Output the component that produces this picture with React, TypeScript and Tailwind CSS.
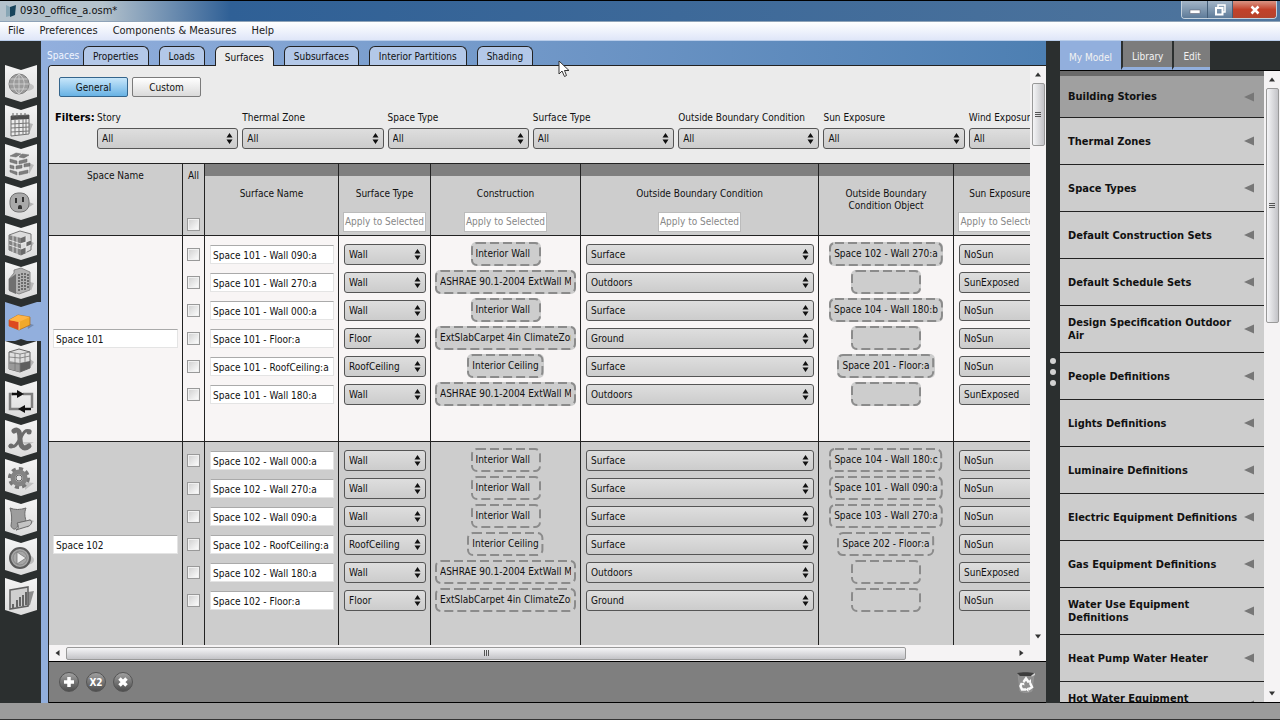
import type { ReactNode } from 'react';

type Surface = { name: string; type: string; construction: string; boundary: string; object: string; sun: string };
type Space = { name: string; rowClass: string; surfaces: Surface[] };

const EXT_WALL = 'ASHRAE 90.1-2004 ExtWall Mass ClimateZone';
const EXT_SLAB = 'ExtSlabCarpet 4in ClimateZone 1-8';

const spaces: Space[] = [
  {
    name: 'Space 101',
    rowClass: 'bg-[#f8f5f5]',
    surfaces: [
      { name: 'Space 101 - Wall 090:a', type: 'Wall', construction: 'Interior Wall', boundary: 'Surface', object: 'Space 102 - Wall 270:a', sun: 'NoSun' },
      { name: 'Space 101 - Wall 270:a', type: 'Wall', construction: EXT_WALL, boundary: 'Outdoors', object: '', sun: 'SunExposed' },
      { name: 'Space 101 - Wall 000:a', type: 'Wall', construction: 'Interior Wall', boundary: 'Surface', object: 'Space 104 - Wall 180:b', sun: 'NoSun' },
      { name: 'Space 101 - Floor:a', type: 'Floor', construction: EXT_SLAB, boundary: 'Ground', object: '', sun: 'NoSun' },
      { name: 'Space 101 - RoofCeiling:a', type: 'RoofCeiling', construction: 'Interior Ceiling', boundary: 'Surface', object: 'Space 201 - Floor:a', sun: 'NoSun' },
      { name: 'Space 101 - Wall 180:a', type: 'Wall', construction: EXT_WALL, boundary: 'Outdoors', object: '', sun: 'SunExposed' },
    ],
  },
  {
    name: 'Space 102',
    rowClass: 'bg-[#cdcdcd]',
    surfaces: [
      { name: 'Space 102 - Wall 000:a', type: 'Wall', construction: 'Interior Wall', boundary: 'Surface', object: 'Space 104 - Wall 180:c', sun: 'NoSun' },
      { name: 'Space 102 - Wall 270:a', type: 'Wall', construction: 'Interior Wall', boundary: 'Surface', object: 'Space 101 - Wall 090:a', sun: 'NoSun' },
      { name: 'Space 102 - Wall 090:a', type: 'Wall', construction: 'Interior Wall', boundary: 'Surface', object: 'Space 103 - Wall 270:a', sun: 'NoSun' },
      { name: 'Space 102 - RoofCeiling:a', type: 'RoofCeiling', construction: 'Interior Ceiling', boundary: 'Surface', object: 'Space 202 - Floor:a', sun: 'NoSun' },
      { name: 'Space 102 - Wall 180:a', type: 'Wall', construction: EXT_WALL, boundary: 'Outdoors', object: '', sun: 'SunExposed' },
      { name: 'Space 102 - Floor:a', type: 'Floor', construction: EXT_SLAB, boundary: 'Ground', object: '', sun: 'NoSun' },
    ],
  },
];

const tabs = ['Properties', 'Loads', 'Surfaces', 'Subsurfaces', 'Interior Partitions', 'Shading'];
const filters = ['Story', 'Thermal Zone', 'Space Type', 'Surface Type', 'Outside Boundary Condition', 'Sun Exposure', 'Wind Exposure'];

const columns = [
  { title: 'Surface Name', apply: false },
  { title: 'Surface Type', apply: true },
  { title: 'Construction', apply: true },
  { title: 'Outside Boundary Condition', apply: true },
  { title: 'Outside Boundary Condition Object', apply: false, wrap: true },
  { title: 'Sun Exposure', apply: true },
];

const library = [
  'Building Stories',
  'Thermal Zones',
  'Space Types',
  'Default Construction Sets',
  'Default Schedule Sets',
  'Design Specification Outdoor Air',
  'People Definitions',
  'Lights Definitions',
  'Luminaire Definitions',
  'Electric Equipment Definitions',
  'Gas Equipment Definitions',
  'Water Use Equipment Definitions',
  'Heat Pump Water Heater',
  'Hot Water Equipment Definitions',
];

// Icons are drawn on a 32x38 chevron tile
const railIcons: { label: string; art: ReactNode }[] = [
  {
    label: 'Site',
    art: (
      <>
        <ellipse cx="21" cy="22" rx="8" ry="4" fill="#c2c2c2" />
        <circle cx="14" cy="19" r="10" fill="#9b9b9b" stroke="#808080" />
        <path d="M4 19h20M5.500 14h17M5.500 24h17M14 9v20M14 9c-7 5-7 15 0 20M14 9c7 5 7 15 0 20" fill="none" stroke="#d6d6d6" strokeWidth="0.8" />
      </>
    ),
  },
  {
    label: 'Schedules',
    art: (
      <>
        <path d="M24 18l4 1-4 10z" fill="#b5b5b5" />
        <path d="M6 11l18-1v19l-18 2z" fill="#ececec" stroke="#707070" />
        <path d="M6 11l18-1v4l-18 1z" fill="#4e4e4e" />
        <path d="M6 19l18-1M6 23l18-1M6 27l18-1M10 15v15M14 15v15M18 14v15M21 14v15" stroke="#777" />
        <path d="M8 12V8M12 12V8M16 11V8M20 11V8" stroke="#666" />
      </>
    ),
  },
  {
    label: 'Constructions',
    art: (
      <>
        <path d="M24 19l5 2-5 9z" fill="#bbb" />
        <path d="M5 12l8-4 11 2v18l-11 3-8-4z" fill="#e6e6e6" />
        <path d="M5 12l6-3 5 1-5 3zM17 10l7 1-5 3-5-1zM5 15l7 2v3l-7-2zM14 17l8-2v3l-8 2zM5 21l4 1v3l-4-1zM11 22l6-1v3l-6 1zM19 20l6-1v3l-6 1zM5 26l7 2v3l-7-3zM14 28l9-2v3l-9 2z" fill="#7d7d7d" stroke="#666" strokeWidth="0.5" />
      </>
    ),
  },
  {
    label: 'Loads',
    art: (
      <>
        <path d="M21 18l8 3-8 5z" fill="#b5b5b5" />
        <rect x="5" y="10" width="19" height="19" rx="8" fill="#a9a9a9" stroke="#707070" />
        <path d="M11 15v5M18 14v5" stroke="#333" strokeWidth="2" />
        <path d="M13 26v-2a2 2 0 0 1 4 0v2z" fill="#333" />
      </>
    ),
  },
  {
    label: 'Space Types',
    art: (
      <>
        <path d="M25 18l4 2-4 6z" fill="#b5b5b5" />
        <path d="M4 12l11-4 11 3v16l-10 5-12-5z" fill="#dcdcdc" stroke="#777" />
        <path d="M4 12l12 3v17l-12-5z" fill="#828282" />
        <path d="M16 15l5-2v6l-5 1zM21 19l5-2v5l-5 2zM16 26l5-2v6l-5 2z" fill="#6a6a6a" />
        <path d="M8 13v16M12 14v17M4 17l12 4M4 22l12 4M16 21l10-4M16 26l10-4M21 13v17" stroke="#f1f1f1" strokeWidth="0.8" />
      </>
    ),
  },
  {
    label: 'Building Stories',
    art: (
      <>
        <path d="M25 20l4 1-3 8z" fill="#b8b8b8" />
        <path d="M4 17l5-6v-3l7-2 9 4v18l-11 4-10-4z" fill="#b2b2b2" stroke="#777" strokeWidth="0.8" />
        <path d="M4 17l7-5v20l-7-3z" fill="#707070" />
        <path d="M14 12v18M17 11v18M20 11v17M23 12v15" stroke="#555" strokeDasharray="2 1" strokeWidth="1.500" />
      </>
    ),
  },
  {
    label: 'Facility',
    art: (
      <>
        <path d="M22 21l7 2-6 4z" fill="#7189b0" />
        <path d="M4 18l9-5 12 2v8l-11 5-10-4z" fill="#f0a92c" stroke="#ad6718" strokeWidth="0.7" />
        <path d="M4 18l10 2v8l-10-4z" fill="#dc4a20" />
        <path d="M4 18l9-5 12 2-11 5z" fill="#ffb545" />
        <path d="M14 20v8" stroke="#ffe2a0" strokeWidth="0.8" />
      </>
    ),
  },
  {
    label: 'Spaces',
    art: (
      <>
        <path d="M25 18l4 3-4 6z" fill="#b5b5b5" />
        <path d="M4 11l10-3 11 3v16l-10 4-11-3z" fill="#dfdfdf" stroke="#666" />
        <path d="M15 22l10-2v7l-10 4z" fill="#5e5e5e" />
        <path d="M4 20l11 2v9l-11-3z" fill="#9a9a9a" />
        <path d="M4 16l11 1 10-2M4 22l11 1M15 13v18M10 12v18M20 12v10M4 11l11 2 10-2" fill="none" stroke="#777" strokeWidth="0.8" />
      </>
    ),
  },
  {
    label: 'HVAC Systems',
    art: (
      <>
        <path d="M18 13h9v14M15 28H5V13h3" fill="none" stroke="#808080" strokeWidth="2.500" />
        <path d="M7 13h6M20 28h6" stroke="#111" strokeWidth="2.500" />
        <path d="M12 9l7 4-7 4zM20 24l-7 4 7 4z" fill="#111" />
      </>
    ),
  },
  {
    label: 'Variables',
    art: (
      <>
        <path d="M17 22h12l-7 4z" fill="#c4c4c4" />
        <path d="M9 11c5-3 6 2 6 8s3 12 9 7" fill="none" stroke="#6c6c6c" strokeWidth="5" strokeLinecap="round" />
        <path d="M25 11c-6-2-7 3-10 8s-5 9-10 7" fill="none" stroke="#6c6c6c" strokeWidth="3" strokeLinecap="round" />
        <circle cx="24" cy="12" r="2.500" fill="#6c6c6c" />
        <circle cx="6" cy="26" r="2.500" fill="#6c6c6c" />
      </>
    ),
  },
  {
    label: 'Simulation Settings',
    art: (
      <>
        <path d="M20 23l9 1-9 7z" fill="#c0c0c0" />
        <circle cx="14" cy="19" r="9" fill="none" stroke="#777" strokeWidth="4" strokeDasharray="4 3" />
        <circle cx="14" cy="19" r="6" fill="none" stroke="#838383" strokeWidth="5" />
        <circle cx="14" cy="19" r="3" fill="#e5e5e5" stroke="#666" />
      </>
    ),
  },
  {
    label: 'Scripts',
    art: (
      <>
        <path d="M24 20l5 2-7 7z" fill="#bbb" />
        <path d="M5 9c5 2 10 2 16 0-2 5-1 9 0 13l-8 2c0 7-5 8-7 3 1-6 1-12-1-18z" fill="#9d9d9d" stroke="#6b6b6b" />
        <path d="M12 24l13-3c3 1 1 5-1 6l-13 4c3-1 3-4 1-7z" fill="#c4c4c4" stroke="#6b6b6b" />
      </>
    ),
  },
  {
    label: 'Run Simulation',
    art: (
      <>
        <ellipse cx="22" cy="22" rx="7" ry="5" fill="#bdbdbd" />
        <circle cx="15" cy="20" r="10" fill="#a6a6a6" stroke="#5a5a5a" strokeWidth="2" />
        <circle cx="15" cy="20" r="7" fill="none" stroke="#888" />
        <path d="M12 14l9 6-9 6z" fill="#ededed" stroke="#777" strokeWidth="0.8" />
      </>
    ),
  },
  {
    label: 'Results Summary',
    art: (
      <>
        <path d="M23 14l6-1-4 14-2 1z" fill="#8c8c8c" />
        <path d="M5 12l18-3v19l-18 3z" fill="#cfcfcf" stroke="#606060" strokeWidth="1.500" />
        <path d="M8 30v-4M12 29v-7M15 28v-9M18 28V17M21 27V14" stroke="#666" strokeWidth="2" />
      </>
    ),
  },
];

function RailItem({ label, art, active }: { label: string; art: ReactNode; active: boolean }) {
  return (
    <button aria-label={label} className="block w-full min-h-0 flex-1">
      <svg viewBox="0 0 36 39" className="block h-[39px] w-9">
        <defs>
          <linearGradient id="tile" x1="0" y1="0" x2="0" y2="1">
            <stop offset="0" stopColor="#f4f4f4" />
            <stop offset="1" stopColor="#dcdcdc" />
          </linearGradient>
        </defs>
        {active ? (
          <path d="M0 0l16 5 16-5h4v39H22l-6-2-6 2H0z" fill="#92afdd" />
        ) : (
          <path d="M0 0l16 5 16-5v32l-16 5-16-5z" fill="url(#tile)" />
        )}
        {art}
      </svg>
    </button>
  );
}

function Select({ label, value }: { label: string; value: string }) {
  return (
    <span className="relative block w-full">
      <select
        aria-label={label}
        defaultValue={value}
        className="block h-[21px] w-full appearance-none rounded-[3px] border border-[#555] bg-linear-to-b from-[#dedede] to-[#cccccc] pt-px pl-1 text-[10px] leading-[18px] text-[#111]"
      >
        <option>{value}</option>
      </select>
      <svg viewBox="0 0 7 11" className="pointer-events-none absolute top-[5px] right-[5px] h-[11px] w-[7px]" fill="#111">
        <path d="M3.500 0L6.500 4.500h-6zM3.500 11L6.500 6.500h-6z" />
      </svg>
    </span>
  );
}

function DropZone({ text }: { text: string }) {
  return (
    <button aria-label={text || 'Empty'} className="relative mx-auto block h-6 max-w-full min-w-[70px] rounded-[5px] bg-[#cdcdcd] px-[5px] text-left text-[10px] leading-6 text-[#111]">
      <svg className="absolute inset-0 h-full w-full">
        <rect x="1" y="1" rx="5" className="h-[calc(100%-2px)] w-[calc(100%-2px)]" fill="none" stroke="#8b8b8b" strokeWidth="2" strokeDasharray="9 4" />
      </svg>
      <span className="relative block overflow-hidden whitespace-nowrap">{text || '\u00a0'}</span>
    </button>
  );
}

function TextBox({ label, value }: { label: string; value: string }) {
  return <input type="text" aria-label={label} defaultValue={value} className="block h-[19px] w-full border border-[#e4e4e4] border-t-[#aaa] bg-white px-0.5 pt-0.5 text-[10px] text-[#111]" />;
}

function Check({ label }: { label: string }) {
  return <input type="checkbox" aria-label={label} className="mx-auto block size-[13px] appearance-none border border-[#999] bg-linear-to-br from-[#cfcfcf] to-white outline-1 -outline-offset-2 outline-[#f1f1f1]" />;
}

function Grip({ vertical }: { vertical?: boolean }) {
  return vertical ? (
    <svg viewBox="0 0 8 7" className="h-[7px] w-2">
      <path d="M1 1.500h6M1 3.500h6M1 5.500h6" stroke="#555" />
    </svg>
  ) : (
    <svg viewBox="0 0 7 8" className="h-2 w-[7px]">
      <path d="M1.500 1v6M3.500 1v6M5.500 1v6" stroke="#555" />
    </svg>
  );
}

const cell = 'border-r border-[#222] p-0';

function SpaceRows({ space }: { space: Space }) {
  return (
    <tbody className={space.rowClass}>
      <tr className="h-1">
        <td rowSpan={space.surfaces.length + 2} className={`${cell} border-b px-1 align-middle`}>
          <TextBox label="Space name" value={space.name} />
        </td>
        {[0, 1, 2, 3, 4, 5, 6].map((i) => <td key={i} className={cell} />)}
      </tr>
      {space.surfaces.map((s) => (
        <tr key={s.name} className="h-7">
          <td className={cell}><Check label={`Select ${s.name}`} /></td>
          <td className={`${cell} pr-1 pl-[5px]`}><TextBox label="Surface name" value={s.name} /></td>
          <td className={`${cell} pr-1 pl-[5px]`}><Select label="Surface type" value={s.type} /></td>
          <td className={`${cell} px-1`}><DropZone text={s.construction} /></td>
          <td className={`${cell} pr-1 pl-[5px]`}><Select label="Outside boundary condition" value={s.boundary} /></td>
          <td className={`${cell} px-1`}><DropZone text={s.object} /></td>
          <td className={`${cell} pr-1 pl-[5px]`}><Select label="Sun exposure" value={s.sun} /></td>
        </tr>
      ))}
      <tr className="h-[34px]">
        {[0, 1, 2, 3, 4, 5, 6].map((i) => <td key={i} className={`${cell} border-b`} />)}
      </tr>
    </tbody>
  );
}

function TitleBar() {
  return (
    <header className="flex h-[22px] shrink-0 items-center border-t border-b border-t-black border-b-[#8fa3b8] bg-linear-to-r from-[#b4c2cc] from-8% via-[#2f6096] via-18% to-[#4f759d]">
      <svg viewBox="0 0 14 14" className="ml-1 size-3.5">
        <path d="M2 1l4 2v9l-4 1z" fill="#88a6b5" />
        <path d="M6 3l6-2-1 10-5 2z" fill="#17445c" />
      </svg>
      <h1 className="ml-0.5 text-[11px] text-[#111]">0930_office_a.osm*</h1>
      <div className="mr-[3px] ml-auto flex h-[18px] self-start overflow-hidden rounded-b-[4px] border border-t-0 border-[#c3d0dc]">
        <button aria-label="Minimize" className="flex w-[26px] items-center justify-center border-r border-[#445e78] bg-linear-to-b from-[#a3b5c7] to-[#5e7b99]">
          <svg viewBox="0 0 12 10" className="h-2.5 w-3"><rect x="1" y="5" width="10" height="3.500" fill="#fff" stroke="#556" strokeWidth="0.5" /></svg>
        </button>
        <button aria-label="Restore" className="flex w-[25px] items-center justify-center border-r border-[#445e78] bg-linear-to-b from-[#a3b5c7] to-[#5e7b99]">
          <svg viewBox="0 0 12 12" className="size-3" fill="none" stroke="#fff" strokeWidth="1.500"><path d="M4 3V1h7v7H9" /><rect x="2" y="4" width="6.500" height="6.500" strokeWidth="2" /></svg>
        </button>
        <button aria-label="Close" className="flex w-[43px] items-center justify-center bg-linear-to-b from-[#d99383] via-[#c2412a] to-[#b5442d]">
          <svg viewBox="0 0 12 10" className="h-2.5 w-3"><path d="M2.500 1.500l7 7M9.500 1.500l-7 7" stroke="#fff" strokeWidth="2.500" /></svg>
        </button>
      </div>
    </header>
  );
}

function ScrollColumn({ thumb }: { thumb: string }) {
  return (
    <div className="flex w-4 shrink-0 flex-col items-center bg-[#f5f3f4]">
      <svg viewBox="0 0 8 5" className="mt-[6px] mb-[6px] h-[5px] w-2 shrink-0"><path d="M1 4.500h6L4 0.500z" fill="#333" /></svg>
      <div className={`flex w-[13px] shrink-0 items-center justify-center rounded-[2px] border border-[#999] bg-linear-to-r from-[#f5f5f7] to-[#c3c3c7] ${thumb}`}>
        <Grip vertical />
      </div>
      <svg viewBox="0 0 8 5" className="mt-auto mb-[6px] h-[5px] w-2 shrink-0"><path d="M1 0.500h6L4 4.500z" fill="#333" /></svg>
    </div>
  );
}

function FooterButton({ label, children }: { label: string; children: ReactNode }) {
  return (
    <button aria-label={label} className="flex size-5 items-center justify-center rounded-full border border-[#555] bg-linear-to-b from-[#a0a0a0] to-[#4e4e4e]">
      {children}
    </button>
  );
}

function SurfacesPane() {
  return (
    <div className="flex min-h-0 flex-1">
      <div className="min-w-0 flex-1 overflow-hidden">
        <div className="h-[97px] bg-[#ebebeb] pt-[11px]">
          <div className="ml-2.5 flex gap-1">
            <button className="h-5 w-[69px] rounded-[2px] border border-[#34658c] bg-linear-to-b from-[#c7e6fa] to-[#67b2e4] text-[10px] text-[#111]">General</button>
            <button className="h-5 w-[69px] rounded-[2px] border border-[#7b7b7b] bg-linear-to-b from-white to-[#dadada] text-[10px] text-[#111]">Custom</button>
          </div>
          <div className="mt-3.5 ml-1.5 flex">
            <h2 className="w-[42px] shrink-0 text-[11px] leading-[14px] font-bold">Filters:</h2>
            <div className="grid w-[1013px] shrink-0 grid-cols-7 gap-1">
              {filters.map((f) => (
                <label key={f} className="block text-[10px] leading-[14px] whitespace-nowrap text-[#111]">
                  <span className="mb-[3px] block">{f}</span>
                  <Select label={f} value="All" />
                </label>
              ))}
            </div>
          </div>
        </div>

        <table className="w-[998px] table-fixed border-separate border-spacing-0 border-t border-[#222] text-[10px] leading-3 text-[#111]">
          <colgroup>
            <col className="w-[134px]" />
            <col className="w-[22px]" />
            <col className="w-[134px]" />
            <col className="w-[92px]" />
            <col className="w-[150px]" />
            <col className="w-[238px]" />
            <col className="w-[135px]" />
            <col className="w-[93px]" />
          </colgroup>
          <thead>
            <tr className="h-[72px] bg-[#cdcdcd]">
              <th className={`${cell} border-b pt-1.5 align-top font-normal`}>Space Name</th>
              <th className={`${cell} border-b pt-1.5 align-top font-normal`}>
                <span className="mb-9 block">All</span>
                <Check label="Select all" />
              </th>
              {columns.map((c) => (
                <th key={c.title} className={`${cell} border-b align-top font-normal`}>
                  <div className="mb-3 h-3 bg-[#7f7f7f]" />
                  <span className={`mx-auto block h-6 text-center ${c.wrap ? 'max-w-[100px]' : ''}`}>{c.title}</span>
                  {c.apply && <button className="mx-auto mb-[3px] block h-5 border border-[#bbb] bg-white px-px text-[10px] whitespace-nowrap text-[#888]">Apply to Selected</button>}
                </th>
              ))}
            </tr>
          </thead>
          {spaces.map((s) => <SpaceRows key={s.name} space={s} />)}
        </table>
      </div>
      <ScrollColumn thumb="h-[63px]" />
    </div>
  );
}

export default function App() {
  return (
    <div className="relative flex h-screen w-full flex-col overflow-hidden bg-[#2b2f2f] font-['DejaVu_Sans_Condensed','DejaVu_Sans',sans-serif]">
      <TitleBar />
      <nav className="flex h-[19px] shrink-0 items-center gap-[15px] border-b border-[#b9cdea] bg-linear-to-b from-white to-[#dfe6f8] pl-2 text-[11px] text-[#222]">
        {['File', 'Preferences', 'Components & Measures', 'Help'].map((m) => <button key={m}>{m}</button>)}
      </nav>

      <div className="flex min-h-0 flex-1">
        <aside className="w-[41px] shrink-0 pt-6 pl-[5px]">
          <nav className="flex h-[552px] flex-col">
            {railIcons.map((r) => <RailItem key={r.label} label={r.label} art={r.art} active={r.label === 'Facility'} />)}
          </nav>
        </aside>

        <main className="flex min-w-0 flex-1 flex-col bg-[#92afdd]">
          <div className="flex h-6 shrink-0 items-end gap-2.5 bg-linear-to-r from-[#92afdd] to-[#4d7fb2] pl-1.5 text-[10px]">
            <span className="-mr-1.5 self-center pt-1.5 leading-3 text-[#f0f5ff]">Spaces</span>
            {tabs.map((t) => (
              <button
                key={t}
                className={`rounded-t-[6px] border border-b-0 border-[#222] px-[9px] text-[#111] ${t === 'Surfaces' ? 'relative z-10 -mb-px h-5 bg-[#ebebeb] pt-0.5' : 'h-[19px] bg-[#b3c8e8]'}`}
              >
                {t}
              </button>
            ))}
          </div>
          <div className="ml-[7px] flex min-h-0 flex-1 flex-col overflow-hidden rounded-tl-[4px] border-t border-l border-[#222] bg-[#ebebeb]">
            <SurfacesPane />
            <div className="flex h-4 shrink-0 items-center bg-[#f5f3f4]">
              <svg viewBox="0 0 5 8" className="mx-[6px] h-2 w-[5px] shrink-0"><path d="M4.500 1v6L0.500 4z" fill="#333" /></svg>
              <div className="flex h-[13px] w-[840px] items-center justify-center rounded-[2px] border border-[#999] bg-linear-to-b from-[#f5f5f7] to-[#c3c3c7]">
                <Grip />
              </div>
              <svg viewBox="0 0 5 8" className="mr-[22px] ml-auto h-2 w-[5px] shrink-0"><path d="M0.500 1v6l4-3z" fill="#333" /></svg>
            </div>
            <footer className="flex h-[42px] shrink-0 items-center gap-[7px] border-t border-b border-black bg-[#7f7f7f] px-2.5">
              <FooterButton label="Add">
                <svg viewBox="0 0 12 12" className="size-3"><path d="M6 1v10M1 6h10" stroke="#fff" strokeWidth="3.500" /></svg>
              </FooterButton>
              <FooterButton label="Duplicate"><span className="text-[10px] font-bold text-white">X2</span></FooterButton>
              <FooterButton label="Remove">
                <svg viewBox="0 0 12 12" className="size-3"><path d="M2.500 2.500l7 7M9.500 2.500l-7 7" stroke="#fff" strokeWidth="3.500" /></svg>
              </FooterButton>
              <button aria-label="Purge unused" className="ml-auto">
                <svg viewBox="0 0 20 22" className="h-[22px] w-5">
                  <path d="M2 3h16l-2 17c-3 2-9 2-12 0z" fill="#8f8f8f" stroke="#a2a2a2" strokeWidth="0.5" />
                  <path d="M1 2c5-1 12-1 17 0l-3 3H4z" fill="#3d3d3d" />
                  <path d="M15 5l4-3v2l-3 1.500z" fill="#d5d5d5" />
                  <path d="M7.500 11L10 7.500l2.500 3.500M14 12l2 4-3.500 2.500M10 18.500H6L4.500 15l1.500-3" fill="none" stroke="#fafafa" strokeWidth="2.500" />
                  <path d="M11 11.500l4 .5v-4zM12.500 16v5l-3-2.500zM4 12.500l4-1 .500 3z" fill="#fafafa" />
                </svg>
              </button>
            </footer>
          </div>
        </main>

        <div className="flex w-3.5 shrink-0 flex-col items-center justify-center gap-[5px]">
          {[0, 1, 2].map((i) => <span key={i} className="size-1.5 rounded-full bg-[#d2d2d2]" />)}
        </div>

        <aside className="flex w-[220px] shrink-0 flex-col">
          <div className="flex h-[29px] shrink-0 text-[10px] text-[#f2f2f2]">
            <button className="bg-[#92afdd] px-[9px] pt-1">My Model</button>
            <button className="border-b-[3px] border-l-2 border-b-[#92afdd] border-l-[#2b2f2f] bg-[#7c7c7c] px-[9px] pt-1">Library</button>
            <button className="border-b-[3px] border-l-2 border-b-[#92afdd] border-l-[#2b2f2f] bg-[#7c7c7c] px-[9px] pt-1">Edit</button>
          </div>
          <div className="flex min-h-0 flex-1 border-t border-b border-black">
            <ul className="min-w-0 flex-1 overflow-hidden">
              {library.map((item, i) => (
                <li key={item}>
                  <button
                    className={`flex h-[47px] w-full items-center border-b border-[#222] pr-2.5 pl-2 text-left text-[11px] leading-[13px] font-bold text-[#111] ${i === 0 ? 'border-t-[5px] border-t-[#696969] bg-[#a0a0a0]' : 'bg-[#cdcdcd]'}`}
                  >
                    <span className="min-w-0 flex-1">{item}</span>
                    <svg viewBox="0 0 10 10" className="size-2.5 shrink-0"><path d="M0 5l10-4.500v9z" fill="#777" /></svg>
                  </button>
                </li>
              ))}
            </ul>
            <ScrollColumn thumb="h-[235px]" />
          </div>
        </aside>
      </div>

      <div className="h-[17px] shrink-0 border-b border-[#333] bg-[#9b9b9b]" />

      <svg viewBox="0 0 12 18" className="pointer-events-none absolute top-[60px] left-[558px] h-[18px] w-3">
        <path d="M1 1v13l3-3 2.500 5.500 2-1L6.500 10.500H11z" fill="#fff" stroke="#333" />
      </svg>
    </div>
  );
}
